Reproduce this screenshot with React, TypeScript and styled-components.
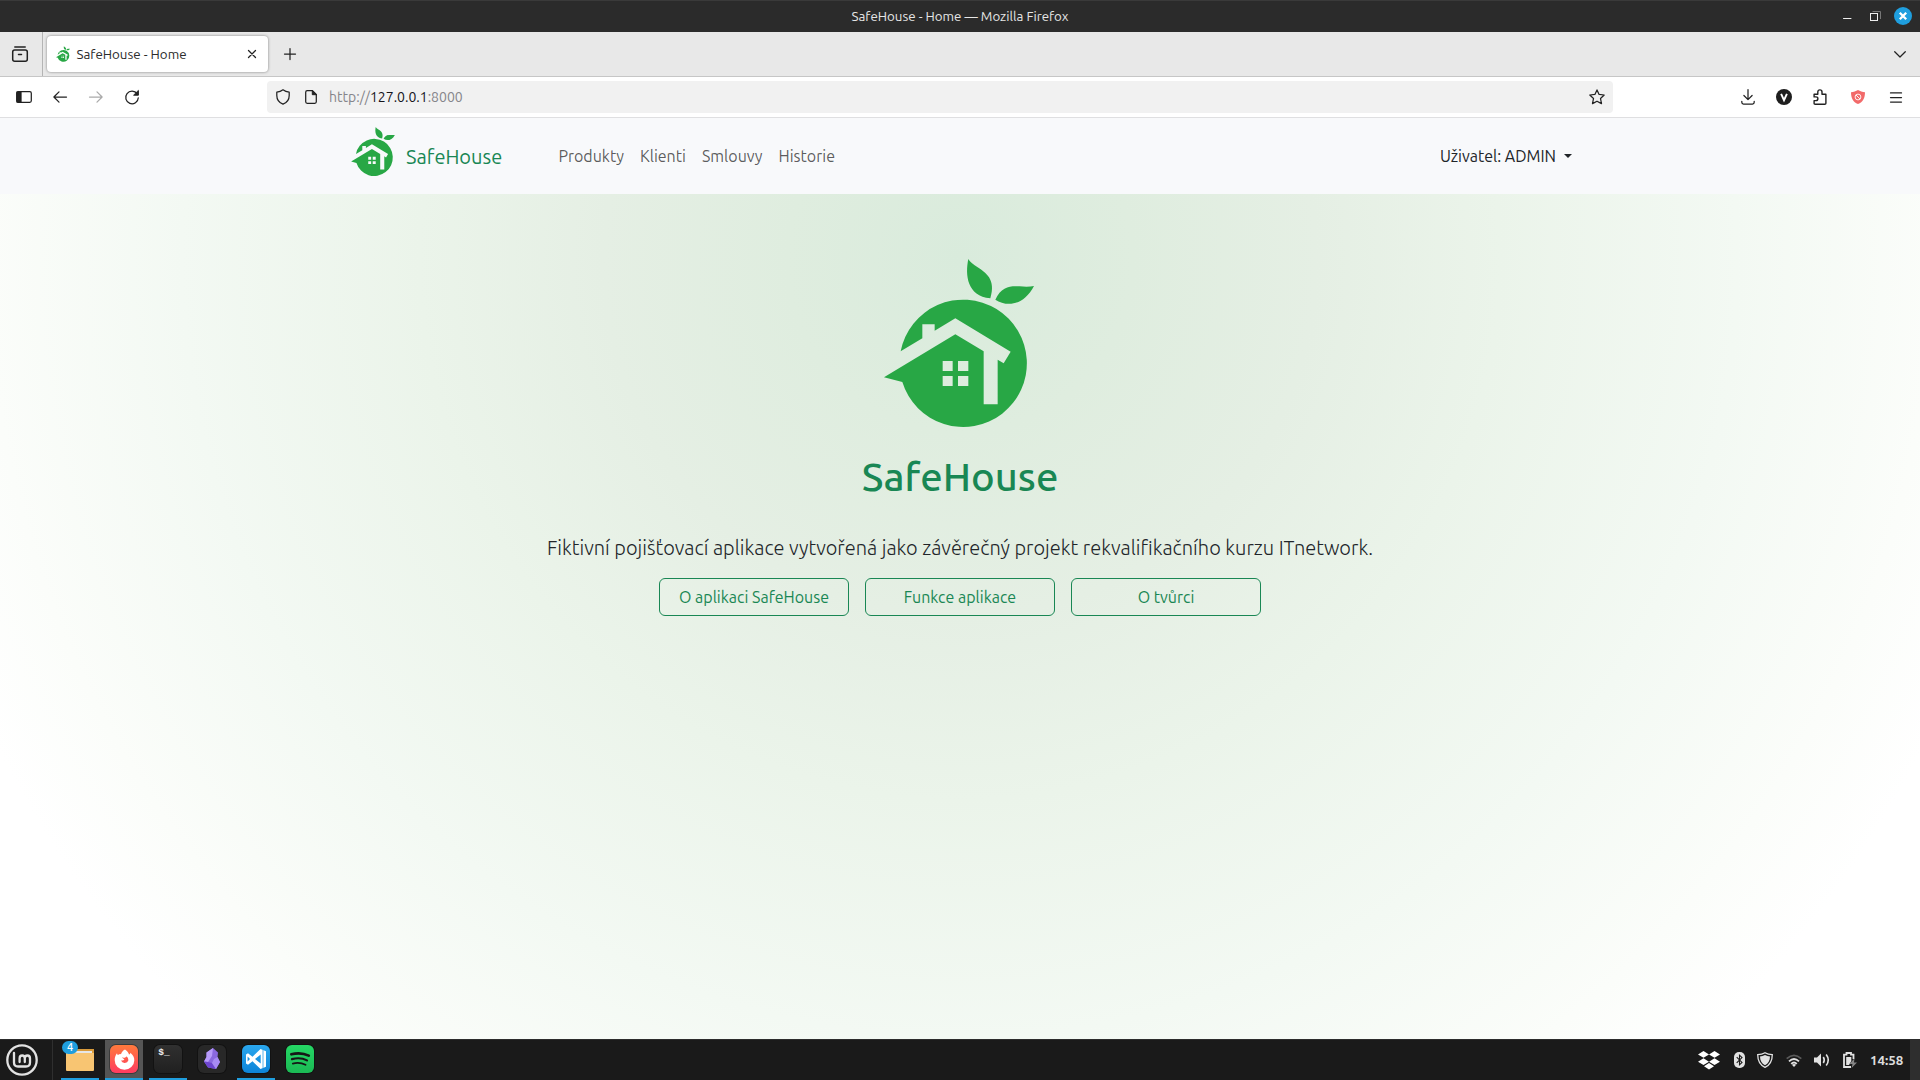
import React from 'react';
import styled, { createGlobalStyle } from 'styled-components';

const GlobalStyle = createGlobalStyle`
  * { box-sizing: border-box; }
  body { margin: 0; background: #fff; font-family: Ubuntu, "Noto Sans", "Open Sans", sans-serif; }
  svg { display: block; flex: none; overflow: visible; }
`;

const Screen = styled.div`
  width: 1920px;
  height: 1080px;
  display: flex;
  flex-direction: column;
  overflow: hidden;
`;

/* ---------- window title bar ---------- */
const TitleBar = styled.header`
  height: 32px;
  flex: none;
  display: grid;
  grid-template-columns: 200px 1fr 200px;
  align-items: center;
  background: #2b2b2b;
  border-top: 1px solid #3a3a3a;
  color: #e6e6e6;
`;
const WindowTitle = styled.div`
  grid-column: 2;
  text-align: center;
  font-size: 13.33px;
  line-height: 20px;
`;
const WindowButtons = styled.div`
  display: flex;
  justify-content: flex-end;
  align-items: center;
  padding: 0 8px 1px 0;
  gap: 18px;
`;
const CloseButton = styled.span`margin-left: -5px;`;

/* ---------- tab strip ---------- */
const TabStrip = styled.div`
  height: 45px;
  flex: none;
  display: flex;
  align-items: center;
  background: #e8e8e8;
  border-bottom: 1px solid #c6c6c6;
  color: #222;
`;
const TabOverview = styled.div`
  width: 43px;
  height: 44px;
  display: flex;
  align-items: center;
  padding-left: 12px;
  border-right: 1px solid #b4b4b4;
`;
const Tab = styled.div`
  width: 221px;
  height: 36px;
  margin-left: 4px;
  padding: 0 12px 0 9px;
  display: flex;
  align-items: center;
  background: #fff;
  border-radius: 4px;
  box-shadow: 0 0 3px rgba(0, 0, 0, 0.45);
`;
const TabLabel = styled.span`
  flex: 1;
  padding: 1px 0 0 6.5px;
  font-size: 13.33px;
  line-height: 20px;
  color: #2b2b2b;
`;
const StripButton = styled.div<{ $push?: boolean }>`
  width: 28px;
  display: flex;
  justify-content: center;
  margin-left: ${p => (p.$push ? 'auto' : '7.5px')};
  margin-right: 6px;
`;

/* ---------- toolbar ---------- */
const Toolbar = styled.div`
  height: 41px;
  flex: none;
  display: flex;
  align-items: center;
  padding: 0 5px 0 6px;
  background: #fff;
  border-bottom: 1px solid #dfdfe1;
`;
const ToolButton = styled.div<{ $w?: number }>`
  width: ${p => p.$w ?? 36}px;
  display: flex;
  justify-content: center;
`;
const AddressBar = styled.div`
  width: 1346px;
  height: 32px;
  margin: 0 auto 0 117px;
  padding: 0 8px 0 9px;
  display: flex;
  align-items: center;
  background: #f1f1f1;
  border-radius: 4px;
`;
const Address = styled.span`
  flex: 1;
  padding-left: 12px;
  font-size: 14px;
  line-height: 20px;
  color: #85858a;
  b { font-weight: 400; color: #15141a; }
`;
const DocSlot = styled.div`padding-left: 15px;`;

/* ---------- site navigation ---------- */
const SiteNav = styled.nav`
  height: 76px;
  flex: none;
  display: flex;
  align-items: center;
  padding: 0 348px 0 351px;
  background: #f8f9fb;
`;
const Brand = styled.a`
  display: flex;
  align-items: center;
  gap: 11px;
  width: 207.4px;
  font-size: 20px;
  line-height: 30px;
  color: #198754;
`;
const BrandLogo = styled.span`padding-bottom: 9px;`;
const BrandName = styled.span`padding-top: 1px;`;
const NavLinks = styled.div`
  display: flex;
  gap: 16px;
  font-size: 16px;
  line-height: 24px;
  color: rgba(0, 0, 0, 0.65);
`;
const UserMenu = styled.div`
  margin-left: auto;
  display: flex;
  align-items: center;
  gap: 8px;
  font-size: 16px;
  line-height: 24px;
  color: #212529;
`;
const Caret = styled.i`
  border: 4.8px solid transparent;
  border-top-color: #212529;
  border-bottom: 0;
`;

/* ---------- page ---------- */
const Hero = styled.main`
  flex: 1;
  display: flex;
  flex-direction: column;
  align-items: center;
  padding-top: 65px;
  background: radial-gradient(circle 1080px at 960px 66px,
    #d9ebdc 0%, #dfeddf 16%, #e5efe4 33%, #ebf4ea 50%, #f3f9f3 72%, #fbfdfa 90%, #fff 100%);
`;
const HeroLogo = styled.div`margin-right: 1.4px;`;
const HeroTitle = styled.h1`
  margin: 26px 0 32px;
  font-size: 40px;
  line-height: 48px;
  font-weight: 500;
  color: #198754;
`;
const Lead = styled.p`
  margin: 0 0 15px;
  font-size: 20px;
  line-height: 30px;
  font-weight: 300;
  color: #212529;
`;
const ButtonRow = styled.div`
  display: flex;
  gap: 16px;
`;
const OutlineButton = styled.a`
  width: 190px;
  height: 38px;
  display: flex;
  align-items: center;
  justify-content: center;
  border: 1px solid #198754;
  border-radius: 6px;
  font-size: 16px;
  line-height: 24px;
  color: #198754;
`;

/* ---------- desktop panel ---------- */
const Panel = styled.footer`
  height: 41px;
  flex: none;
  display: flex;
  align-items: stretch;
  background: #1a1a1a;
  border-top: 1px solid #2c2c2c;
`;
const MenuButton = styled.div`
  width: 53px;
  margin-right: 8px;
  padding-left: 6px;
  display: flex;
  align-items: center;
  border-right: 1px solid #2f2f2f;
`;
const Launchers = styled.div`
  display: flex;
  gap: 6px;
`;
const Launcher = styled.div<{ $open?: boolean; $active?: boolean }>`
  position: relative;
  width: 38px;
  padding-top: 5px;
  display: flex;
  justify-content: center;
  align-items: flex-start;
  background: ${p => (p.$active ? '#555' : 'transparent')};
  border-bottom: 2px solid ${p => (p.$open ? '#1f9ede' : 'transparent')};
`;
const CountBadge = styled.span`
  position: absolute;
  left: 1px;
  top: 1px;
  width: 16px;
  height: 13px;
  border-radius: 7px;
  background: #1f9ede;
  color: #fff;
  font-size: 11px;
  font-weight: 500;
  line-height: 13px;
  text-align: center;
`;
const Tile = styled.div<{ $bg: string }>`
  width: 28px;
  height: 28px;
  border-radius: 6px;
  display: flex;
  align-items: center;
  justify-content: center;
  background: ${p => p.$bg};
  box-shadow: 0 0 0 1px rgba(0, 0, 0, 0.3);
`;
const Prompt = styled.span`
  align-self: flex-start;
  margin: 3px 8px 0 0;
  font: 700 9.5px/9px "Liberation Mono", monospace;
  color: #eee;
`;
const Tray = styled.div`
  margin-left: auto;
  display: flex;
  align-items: center;
`;
const TraySlot = styled.div<{ $w: number }>`
  width: ${p => p.$w}px;
  display: flex;
  justify-content: center;
`;
const Clock = styled.time`
  width: 40px;
  padding-top: 1px;
  font-size: 13.33px;
  line-height: 16px;
  font-weight: 700;
  color: #dcdcdc;
`;
const ShowDesktop = styled.div`
  width: 10px;
  background: #2e2e2e;
`;

function Logo({ width, height }: { width: number; height: number }) {
  return (
    <svg width={width} height={height} viewBox="73 57 450 504" fill="#28a745">
      <path
        fillRule="evenodd"
        d="M123 334A191 191 0 1 1 128 426L73 412L287 283L372 334V493H414V359L432 370L453 335L287 235L225 272V253H188V295ZM249 363V393H279V363ZM295 363V393H326V363ZM249 408V438H279V408ZM295 408V438H326V408Z"
      />
      <path d="M326 57C316 105 322 168 392 175C410 118 378 98 354 82Q332 68 326 57Z" />
      <path d="M407 179C425 138 455 137 480 139Q505 142 523 138C490 200 440 200 407 179Z" />
    </svg>
  );
}

type LineProps = { w: number; h: number; children: React.ReactNode; color?: string; sw?: number };
function Line({ w, h, children, color = '#222', sw = 1.25 }: LineProps) {
  return (
    <svg width={w} height={h} viewBox={`0 0 ${w} ${h}`} fill="none" stroke={color} strokeWidth={sw} strokeLinecap="round" strokeLinejoin="round">
      {children}
    </svg>
  );
}

const NAV = ['Produkty', 'Klienti', 'Smlouvy', 'Historie'];
const ACTIONS = ['O aplikaci SafeHouse', 'Funkce aplikace', 'O tvůrci'];

function BrowserChrome() {
  return (
    <>
      <TitleBar>
        <WindowTitle>SafeHouse - Home — Mozilla Firefox</WindowTitle>
        <WindowButtons>
          <Line w={9} h={10} color="#eee" sw={1}><path d="M.5 7.5H8" /></Line>
          <svg width="11" height="11" fill="none">
            <path d="M2.5.5H10.5V8" stroke="#777" />
            <rect x=".5" y="2.5" width="7" height="7" stroke="#eee" />
          </svg>
          <CloseButton>
            <svg width="18" height="18" viewBox="0 0 18 18">
              <circle cx="9" cy="9" r="9" fill="#1f9ede" />
              <path d="M5.8 5.8L12.2 12.2M12.2 5.8L5.8 12.2" stroke="#fff" strokeWidth="2.3" />
            </svg>
          </CloseButton>
        </WindowButtons>
      </TitleBar>
      <TabStrip>
        <TabOverview>
          <Line w={16} h={16} sw={1.5}>
            <path d="M2.8 .9H13.2" /><rect x=".7" y="3.9" width="14.6" height="11.3" rx="2" /><path d="M6.5 8.6H9.5" />
          </Line>
        </TabOverview>
        <Tab>
          <Logo width={14} height={16} />
          <TabLabel>SafeHouse - Home</TabLabel>
          <Line w={8} h={8}><path d="M.5 .5L7.5 7.5M7.5 .5L.5 7.5" /></Line>
        </Tab>
        <StripButton><Line w={12} h={12}><path d="M6 .5V11.5M.5 6H11.5" /></Line></StripButton>
        <StripButton $push><Line w={12} h={7}><path d="M.7 .7L6 6L11.3 .7" /></Line></StripButton>
      </TabStrip>
      <Toolbar>
        <ToolButton>
          <Line w={16} h={12}><rect x=".7" y=".7" width="14.6" height="10.6" rx="1.5" /><path d="M1 1H5V11H1Z" fill="#222" /></Line>
        </ToolButton>
        <ToolButton><Line w={14} h={12}><path d="M13.5 6H1M6 .9L.9 6L6 11.1" /></Line></ToolButton>
        <ToolButton><Line w={14} h={12} color="#aaa"><path d="M.5 6H13M8 .9L13.1 6L8 11.1" /></Line></ToolButton>
        <ToolButton>
          <Line w={14} h={14}><path d="M12.2 3.9A6.3 6.3 0 1 0 13.3 7.8" /><path d="M13.4 .8V5.2H9Z" fill="#222" strokeWidth="1" /></Line>
        </ToolButton>
        <AddressBar>
          <Line w={14} h={16}><path d="M7 .8C8.6 2 10.8 2.9 13.2 3.2V6.5C13.2 10.5 10.8 13.7 7 15.2C3.2 13.7 .8 10.5 .8 6.5V3.2C3.2 2.9 5.4 2 7 .8Z" /></Line>
          <DocSlot>
            <Line w={12} h={14}><path d="M2.2 .7H7.5L11.3 4.5V11.8Q11.3 13.3 9.8 13.3H2.2Q.7 13.3 .7 11.8V2.2Q.7 .7 2.2 .7Z" /><path d="M7.3 .8V4.7H11.2Z" fill="#222" strokeWidth="1" /></Line>
          </DocSlot>
          <Address>http://<b>127.0.0.1</b>:8000</Address>
          <Line w={16} h={16}><path d="M8 .9L10.1 5.4L15.2 6L11.5 9.5L12.5 14.6L8 12.2L3.5 14.6L4.5 9.5L.8 6L5.9 5.4Z" /></Line>
        </AddressBar>
        <ToolButton $w={35}><Line w={14} h={16}><path d="M7 .6V10.5M2.9 6.5L7 10.6L11.1 6.5M.8 12.3V13.3Q.8 15 2.5 15H11.5Q13.2 15 13.2 13.3V12.3" /></Line></ToolButton>
        <ToolButton $w={37}>
          <svg width="16" height="16"><circle cx="8" cy="8" r="8" fill="#1e1e1e" /><path d="M5.1 4.8L8 11.2L10.9 4.8" fill="none" stroke="#fff" strokeWidth="1.9" /></svg>
        </ToolButton>
        <ToolButton $w={36}>
          <Line w={14} h={16} sw={1.4}><path d="M1.1 5.2H4.8V3Q4.8 .9 6.9 .9T9 3V5.2H12.9V14.2Q12.9 15.3 11.8 15.3H2.2Q1.1 15.3 1.1 14.2V11.6H2.9Q4.9 11.5 4.9 9.7T2.9 7.9H1.1Z" /></Line>
        </ToolButton>
        <ToolButton $w={39}>
          <svg width="14" height="14" fill="none">
            <path d="M7 0C9 1.3 11.5 2 14 2.2C14 8 12 12 7 14C2 12 0 8 0 2.2C2.5 2 5 1.3 7 0Z" fill="#f26a6a" />
            <circle cx="7" cy="7" r="2.9" stroke="#fff" strokeWidth=".9" /><path d="M5 5L9 9" stroke="#fff" strokeWidth=".9" />
          </svg>
        </ToolButton>
        <ToolButton $w={38}><Line w={12} h={11}><path d="M.5 .9H11.5M.5 5.5H11.5M.5 10.1H11.5" /></Line></ToolButton>
      </Toolbar>
    </>
  );
}

function DesktopPanel() {
  return (
    <Panel>
      <MenuButton>
        <svg width="32" height="32" viewBox="0 0 32 32" fill="none" stroke="#e2e2e2" strokeLinecap="round" strokeLinejoin="round">
          <circle cx="16" cy="16" r="14.7" strokeWidth="2.3" />
          <path d="M8 9V18.5Q8 22.5 12 22.5H20Q24 22.5 24 18.5V14.5Q24 11.5 21.4 11.5T18.8 14.5V18M18.8 14.5Q18.8 11.5 16.2 11.5T13.6 14.5V18" strokeWidth="2.3" />
        </svg>
      </MenuButton>
      <Launchers>
        <Launcher $open>
          <svg width="28" height="28">
            <path d="M1 4H28V12H1Z" fill="#d99b3c" /><path d="M2 6H26V10H2Z" fill="#e6e6e6" />
            <path d="M0 6H8Q9 8 11 8H28V25Q28 26 27 26H1Q0 26 0 25Z" fill="#f8c572" />
          </svg>
          <CountBadge>4</CountBadge>
        </Launcher>
        <Launcher $open $active>
          <Tile $bg="linear-gradient(#ff7a3c, #ff3b60)">
            <svg width="21" height="21" viewBox="0 0 21 21">
              <path fill="#fff" fillRule="evenodd" d="M11 .5C13.5 2 14.5 4 15 5.5Q16.5 5.3 16.3 3.8C19 6 20.5 8.5 20.3 11.5A9.8 9.3 0 0 1 .7 11.3C.6 8.5 1.5 6 3 4.2Q3.2 5.5 4 6.1Q5.5 4.8 7 5.2C7.6 3 9 1.5 11 .5ZM12 7.2C12.4 8.4 10.8 9 8 8.6Q9 10 10.4 10.2Q9.6 12 7 11.5A3.9 3.7 0 0 0 14.4 11.2Q14.6 8.4 12 7.2Z" />
            </svg>
          </Tile>
        </Launcher>
        <Launcher $open><Tile $bg="linear-gradient(#303030, #202020)"><Prompt>$_</Prompt></Tile></Launcher>
        <Launcher>
          <Tile $bg="#282828">
            <svg width="18" height="22" viewBox="0 0 18 22">
              <path d="M10 0L15 4.5L14.5 9L17 14L13 21L5 19.5L1 13.5L3.5 9V4.5Z" fill="#8a68e0" />
              <path d="M10 0L9 8L5 14L1 13.5L3.5 9V4.5Z" fill="#b79bfa" />
              <path d="M5 14L9 15L13 21L5 19.5L1 13.5Z" fill="#6d45cf" />
              <path d="M14.5 9L17 14L13 21L9 15L11 11Z" fill="#a88af5" />
            </svg>
          </Tile>
        </Launcher>
        <Launcher $open>
          <Tile $bg="linear-gradient(#2aa7ee, #0d84d8)">
            <svg width="20" height="20" viewBox="0 0 20 20">
              <path fill="#fff" fillRule="evenodd" d="M14.5 0L20 2.3V17.7L14.5 20L6.5 12.3L2 15.7L0 14.6V5.4L2 4.3L6.5 7.7ZM14.7 5.5L9 10L14.7 14.5ZM1.6 7.6V12.4L4 10Z" />
              <path d="M17 1V19" stroke="#1793e0" strokeWidth=".7" />
            </svg>
          </Tile>
        </Launcher>
        <Launcher>
          <Tile $bg="linear-gradient(#25d865, #1bb954)">
            <Line w={20} h={14} color="#161616" sw={2.2}><path d="M1.3 2.3Q11 -.2 18.8 3.7" strokeWidth="2.6" /><path d="M2 7.1Q10.5 4.9 17 8.4" /><path d="M2.8 11.6Q9.5 9.8 15.5 12.8" strokeWidth="1.8" /></Line>
          </Tile>
        </Launcher>
      </Launchers>
      <Tray>
        <TraySlot $w={24}>
          <svg width="22" height="19" viewBox="0 0 22 19" fill="#fff">
            <path d="M5.5 0L11 3.4L5.5 6.8L0 3.4ZM16.5 0L22 3.4L16.5 6.8L11 3.4ZM5.5 7.3L11 10.7L5.5 14.1L0 10.7ZM16.5 7.3L22 10.7L16.5 14.1L11 10.7ZM11 12L16 15.3L11 18.6L6 15.3Z" />
          </svg>
        </TraySlot>
        <TraySlot $w={36}>
          <svg width="11" height="16" viewBox="0 0 11 16" fill="none">
            <rect width="11" height="16" rx="5" fill="#e2e2e2" /><path d="M2.7 5.2L8 10.4L5.5 12.8V3.2L8 5.6L2.7 10.8" stroke="#1a1a1a" strokeWidth="1.1" />
          </svg>
        </TraySlot>
        <TraySlot $w={16}>
          <svg width="16" height="16" viewBox="0 0 16 16">
            <path d="M8 .7C10 2 12.8 2.6 15.3 2.6C15.3 8.5 13.5 13 8 15.4C2.5 13 .7 8.5 .7 2.6C3.2 2.6 6 2 8 .7Z" fill="none" stroke="#e2e2e2" strokeWidth="1.3" />
            <path d="M8 3.1C9.5 4 11.3 4.5 13 4.6C12.8 8.8 11.4 11.6 8 13.3C4.6 11.6 3.2 8.8 3 4.6C4.7 4.5 6.5 4 8 3.1Z" fill="#e2e2e2" />
          </svg>
        </TraySlot>
        <TraySlot $w={42}>
          <svg width="16" height="13" viewBox="0 0 16 13" fill="none" strokeWidth="1.8">
            <path d="M.7 4.7Q8 -2 15.3 4.7" stroke="#5a5a5a" /><path d="M3 7.4Q8 2.6 13 7.4M5.2 9.8Q8 7.2 10.8 9.8" stroke="#e2e2e2" /><path d="M5.9 10.8Q8 9.4 10.1 10.8L8 13Z" fill="#e2e2e2" />
          </svg>
        </TraySlot>
        <TraySlot $w={14}>
          <svg width="16" height="14" viewBox="0 0 16 14" fill="none" stroke="#e2e2e2" strokeWidth="1.6">
            <path d="M0 4.5H3L7 .5V13.5L3 9.5H0Z" fill="#e2e2e2" stroke="none" /><path d="M9.3 4Q11.2 7 9.3 10M12.2 1.5Q16.3 7 12.2 12.5" />
          </svg>
        </TraySlot>
        <TraySlot $w={41}>
          <svg width="14" height="16" viewBox="0 0 14 16" fill="none">
            <path d="M8 15H1V2.7H3.5V1H8V2.7H10.5V7" stroke="#e2e2e2" strokeWidth="1.8" /><path d="M3.2 5H8.3V9L6 13H3.2Z" fill="#e2e2e2" />
            <path d="M11.5 6.2L6.5 12H9.5L8.6 16L14 10.4H11Z" fill="#858585" />
          </svg>
        </TraySlot>
        <Clock>14:58</Clock>
      </Tray>
      <ShowDesktop />
    </Panel>
  );
}

export default function App() {
  return (
    <Screen>
      <GlobalStyle />
      <BrowserChrome />
      <SiteNav>
        <Brand><BrandLogo><Logo width={44} height={49} /></BrandLogo><BrandName>SafeHouse</BrandName></Brand>
        <NavLinks>{NAV.map(n => <span key={n}>{n}</span>)}</NavLinks>
        <UserMenu>Uživatel: ADMIN<Caret /></UserMenu>
      </SiteNav>
      <Hero>
        <HeroLogo><Logo width={150} height={168} /></HeroLogo>
        <HeroTitle>SafeHouse</HeroTitle>
        <Lead>Fiktivní pojišťovací aplikace vytvořená jako závěrečný projekt rekvalifikačního kurzu ITnetwork.</Lead>
        <ButtonRow>{ACTIONS.map(a => <OutlineButton key={a}>{a}</OutlineButton>)}</ButtonRow>
      </Hero>
      <DesktopPanel />
    </Screen>
  );
}
